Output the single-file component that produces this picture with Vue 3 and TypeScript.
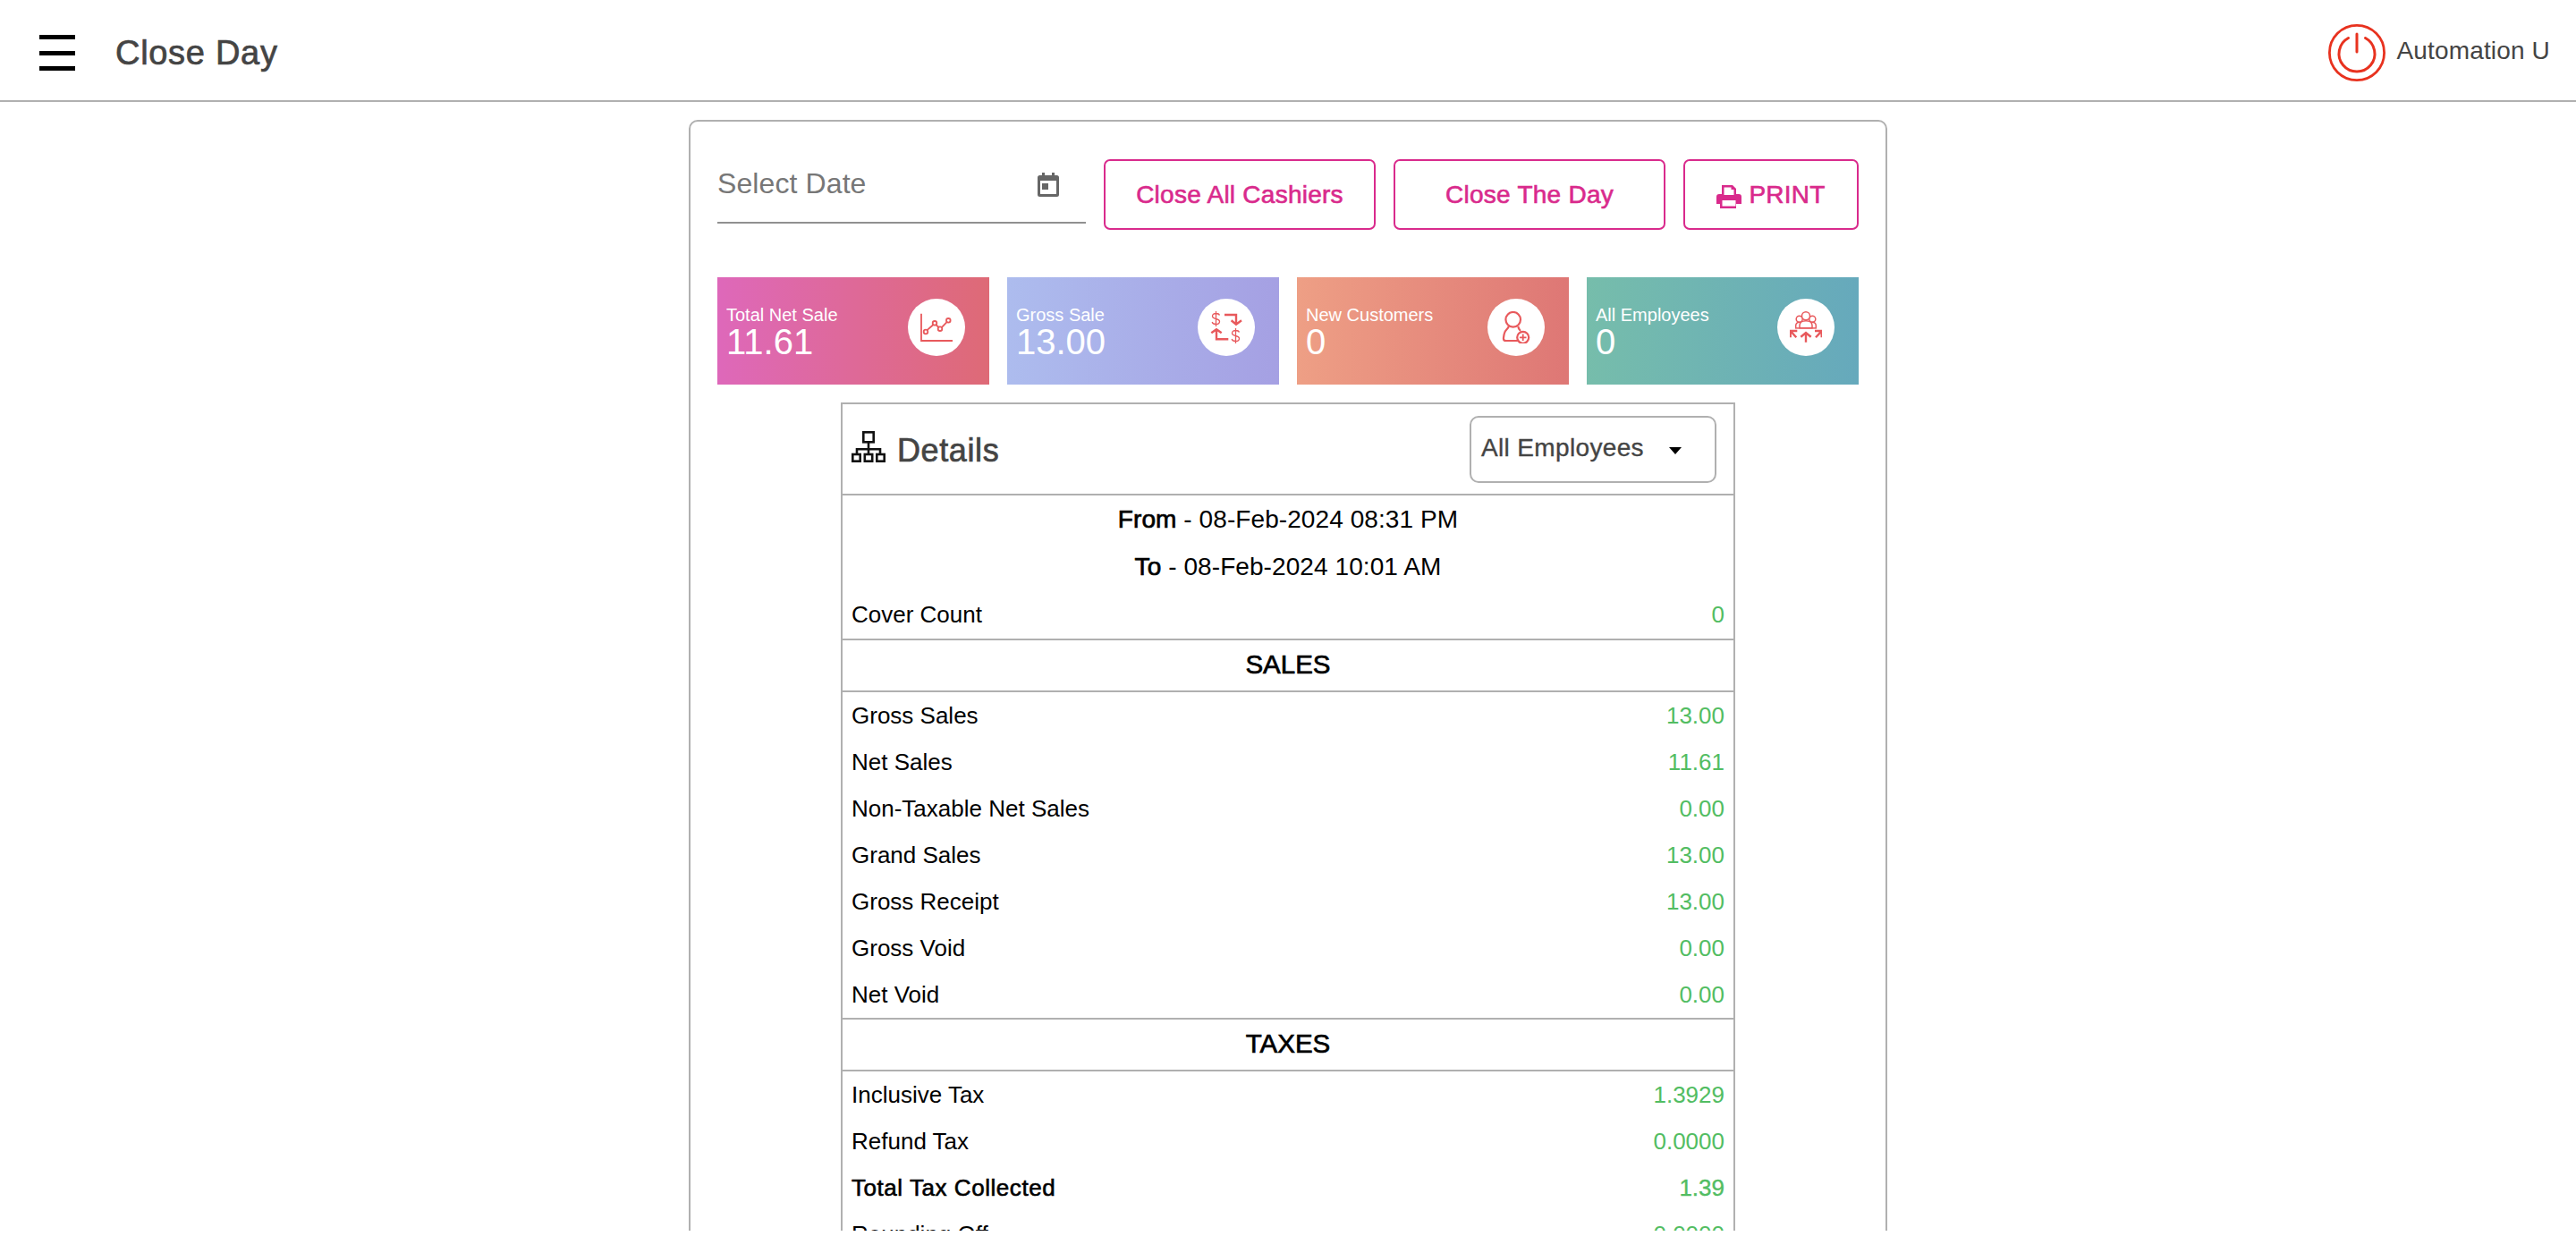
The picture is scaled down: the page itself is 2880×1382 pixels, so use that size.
<script setup lang="ts">
interface Row {
  label: string;
  value: string;
  strong?: boolean;
}

const salesRows: Row[] = [
  { label: 'Gross Sales', value: '13.00' },
  { label: 'Net Sales', value: '11.61' },
  { label: 'Non-Taxable Net Sales', value: '0.00' },
  { label: 'Grand Sales', value: '13.00' },
  { label: 'Gross Receipt', value: '13.00' },
  { label: 'Gross Void', value: '0.00' },
  { label: 'Net Void', value: '0.00' },
];

const taxRows: Row[] = [
  { label: 'Inclusive Tax', value: '1.3929' },
  { label: 'Refund Tax', value: '0.0000' },
  { label: 'Total Tax Collected', value: '1.39', strong: true },
  { label: 'Rounding Off', value: '0.0000' },
];
</script>

<template>
  <div class="page">
    <header class="topbar">
      <div class="topbar-left">
        <div class="burger"><span></span><span></span><span></span></div>
        <h1 class="title">Close Day</h1>
      </div>
      <div class="user">
        <svg class="power" viewBox="0 0 64 64" fill="none" stroke="#e8321f">
          <circle cx="32" cy="32" r="30.600" stroke-width="2.800" />
          <path d="M22.500 15.500a20 20 0 1 0 19 0" stroke-width="3" stroke-linecap="round" />
          <path d="M32 11v20" stroke-width="3" stroke-linecap="round" />
        </svg>
        <span class="user-name">Automation U</span>
      </div>
    </header>

    <main class="panel">
      <div class="actions">
        <div class="date-field">
          <span class="date-label">Select Date</span>
          <svg class="calendar" viewBox="0 0 24 27" fill="#666">
            <path d="M5 0h3v3h8V0h3v3h2.500A2.500 2.500 0 0 1 24 5.500v19a2.500 2.500 0 0 1-2.500 2.500h-19A2.500 2.500 0 0 1 0 24.500v-19A2.500 2.500 0 0 1 2.500 3H5zM3 9v14.500c0 .3.200.5.500.5h17c.3 0 .5-.2.500-.5V9z" />
            <rect x="5" y="12" width="7" height="7" />
          </svg>
        </div>
        <button class="btn btn-cashiers">Close All Cashiers</button>
        <button class="btn btn-day">Close The Day</button>
        <button class="btn btn-print">
          <svg class="printer" viewBox="0 0 28 26" fill="#d92a8c">
            <path d="M6 0h12l4 4v6h3a3 3 0 0 1 3 3v8h-6v5H4v-5h-4v-8a3 3 0 0 1 3-3h3zm2.500 2.500V11h11V5h-3V2.500zM6.500 17v6.500h15V17z" fill-rule="evenodd" />
          </svg>
          PRINT
        </button>
      </div>

      <div class="cards">
        <div class="card card-net">
          <div class="card-text">
            <span class="card-label">Total Net Sale</span>
            <span class="card-value">11.61</span>
          </div>
          <div class="card-icon">
            <svg viewBox="0 0 36 36" fill="none" stroke="#e8595c" stroke-width="1.800">
              <path d="M1 2.700V33h35" />
              <path d="M7.500 21.200l7-6.200M17.200 15l3.400 3M23.800 18.200l6-6.400" />
              <circle cx="6" cy="23" r="2.300" />
              <circle cx="16" cy="13.300" r="2.300" />
              <circle cx="22" cy="19.700" r="2.300" />
              <circle cx="31.300" cy="10.300" r="2.300" />
            </svg>
          </div>
        </div>
        <div class="card card-gross">
          <div class="card-text">
            <span class="card-label">Gross Sale</span>
            <span class="card-value">13.00</span>
          </div>
          <div class="card-icon">
            <svg viewBox="0 0 36 36" fill="none" stroke="#e8595c">
              <path d="M10.500 4.500C10 3 8.500 2.500 6.500 2.500 4 2.500 2.500 3.700 2.500 5.500 2.500 9.500 10.500 7.500 10.500 11.500 10.500 13.500 9 14.500 6.500 14.500 4 14.500 2.500 13.500 2.200 12M6.500 0v17" stroke-width="1.300" />
              <path d="M10.500 4.500C10 3 8.500 2.500 6.500 2.500 4 2.500 2.500 3.700 2.500 5.500 2.500 9.500 10.500 7.500 10.500 11.500 10.500 13.500 9 14.500 6.500 14.500 4 14.500 2.500 13.500 2.200 12M6.500 0v17" stroke-width="1.300" transform="translate(22 19)" />
              <path d="M16 4h13v10M23.600 10.300l5.400 4.400 6-4.400" stroke-width="2.400" />
              <path d="M20.300 31.300H7V21M1.300 24.300l5.700-4 5.700 4" stroke-width="2.400" />
            </svg>
          </div>
        </div>
        <div class="card card-customers">
          <div class="card-text">
            <span class="card-label">New Customers</span>
            <span class="card-value">0</span>
          </div>
          <div class="card-icon">
            <svg viewBox="0 0 36 36" fill="none" stroke="#e8595c" stroke-width="2.200">
              <circle cx="14.700" cy="9.300" r="8.300" />
              <path d="M9.700 17c-.5 3-4.500 4-5 8.300-.3 2-1 4.500-.7 6 .3 1.500 1.300 1.700 2.300 1.700H20" />
              <path d="M20.300 17c.3 2.500 1.500 4 2.700 5" />
              <circle cx="25.700" cy="29.300" r="6.500" fill="#fff" />
              <path d="M25.700 25.500v7.600M21.900 29.300h7.600" stroke-width="1.800" />
            </svg>
          </div>
        </div>
        <div class="card card-employees">
          <div class="card-text">
            <span class="card-label">All Employees</span>
            <span class="card-value">0</span>
          </div>
          <div class="card-icon">
            <svg viewBox="0 0 36 36" fill="none" stroke="#e8595c" stroke-width="1.500">
              <circle cx="10.700" cy="8.700" r="3.500" />
              <circle cx="25.300" cy="8.700" r="3.500" />
              <path d="M6.700 18.700v-2.500c0-2.500 2-4 4.500-4M29.300 18.700v-2.500c0-2.500-2-4-4.500-4" />
              <circle cx="18" cy="5.300" r="4.500" fill="#fff" />
              <path d="M11 18.700v-3c0-3 3-5 7-5s7 2 7 5v3z" fill="#fff" />
              <path d="M6 18.900h24" />
              <path d="M18 34.700V24M12.300 28.700L18 24l5.700 4.700" stroke-width="2.400" />
              <path d="M7.300 29.300L1.200 22.500M8.300 22H.7v7.300" stroke-width="2.400" />
              <path d="M29 29.300l6.200-6.800M28 22h7.700v7.300" stroke-width="2.400" />
            </svg>
          </div>
        </div>
      </div>

      <section class="details">
        <div class="details-head">
          <div class="details-title">
            <svg class="sitemap" viewBox="0 0 38 35" fill="none" stroke="#111" stroke-width="2.600">
              <rect x="13.300" y="1.300" width="11.400" height="11" />
              <path d="M19 12.300v8M6 26v-5.700h26V26M19 20.300V26" />
              <rect x="1.300" y="26" width="8.400" height="7.700" />
              <rect x="14.800" y="26" width="8.400" height="7.700" />
              <rect x="28.300" y="26" width="8.400" height="7.700" />
            </svg>
            <span class="details-label">Details</span>
          </div>
          <div class="employee-select">
            <span>All Employees</span>
            <i class="select-arrow"></i>
          </div>
        </div>

        <div class="summary">
          <p class="range"><b>From</b> - 08-Feb-2024 08:31 PM</p>
          <p class="range"><b>To</b> - 08-Feb-2024 10:01 AM</p>
          <div class="row row-cover">
            <span>Cover Count</span>
            <span class="amount">0</span>
          </div>
        </div>

        <h2 class="section-title">SALES</h2>
        <div class="rows">
          <div v-for="row in salesRows" :key="row.label" class="row">
            <span>{{ row.label }}</span>
            <span class="amount">{{ row.value }}</span>
          </div>
        </div>

        <h2 class="section-title">TAXES</h2>
        <div class="rows">
          <div v-for="row in taxRows" :key="row.label" class="row" :class="{ strong: row.strong }">
            <span>{{ row.label }}</span>
            <span class="amount">{{ row.value }}</span>
          </div>
        </div>
      </section>
    </main>
  </div>
</template>

<style>
html,
body {
  margin: 0;
  background: #fff;
  overflow: hidden;
}
</style>

<style scoped>
.page {
  height: 1376px;
  overflow: hidden;
  background: #fff;
  font-family: 'Liberation Sans', Arial, sans-serif;
  color: #000;
}

.topbar {
  box-sizing: border-box;
  height: 114px;
  border-bottom: 2px solid #b0b0b0;
  display: flex;
  align-items: center;
  justify-content: space-between;
  padding: 6px 29px 0 44px;
}

.topbar-left {
  display: flex;
  align-items: center;
  gap: 45px;
}

.burger {
  width: 40px;
  height: 40px;
  display: flex;
  flex-direction: column;
  justify-content: space-between;
}

.burger span {
  display: block;
  height: 5px;
  background: #000;
}

.title {
  margin: 0;
  font-size: 38px;
  font-weight: 400;
  color: #444;
  letter-spacing: 0.7px;
  -webkit-text-stroke: 0.7px #444;
}

.user {
  display: flex;
  align-items: center;
  gap: 13px;
}

.power {
  width: 64px;
  height: 64px;
  flex: none;
}

.user-name {
  font-size: 28px;
  color: #444;
  letter-spacing: 0.15px;
  padding-bottom: 5px;
}

.panel {
  box-sizing: border-box;
  width: 1340px;
  height: 1400px;
  margin: 20px auto 0;
  padding: 42px 30px 0;
  border: 2px solid #b0b0b0;
  border-radius: 10px;
}

.actions {
  display: flex;
  align-items: stretch;
  height: 79px;
}

.date-field {
  box-sizing: border-box;
  width: 412px;
  margin: 0 20px 0 0;
  height: 72px;
  border-bottom: 2px solid #909090;
  display: flex;
  justify-content: space-between;
  padding-top: 9px;
}

.date-label {
  font-size: 32px;
  line-height: 36px;
  color: #777;
  letter-spacing: 0.1px;
}

.calendar {
  width: 24px;
  height: 27px;
  margin: 6px 30px 0 0;
}

.btn {
  box-sizing: border-box;
  height: 79px;
  background: #fff;
  border: 2px solid #d92a8c;
  border-radius: 7px;
  color: #d92a8c;
  font-family: inherit;
  font-size: 28px;
  letter-spacing: 0.25px;
  -webkit-text-stroke: 0.6px #d92a8c;
  display: flex;
  align-items: center;
  justify-content: center;
  padding: 1px 0 0;
}

.btn-cashiers {
  width: 304px;
  margin-right: 20px;
}

.btn-day {
  width: 304px;
  margin-right: 20px;
}

.btn-print {
  width: 196px;
  gap: 8px;
}

.printer {
  width: 28px;
  height: 26px;
  margin-top: 4px;
}

.cards {
  display: grid;
  grid-template-columns: repeat(4, 304px);
  gap: 20px;
  margin-top: 53px;
}

.card {
  height: 120px;
  box-sizing: border-box;
  padding: 24px 27px 0 10px;
  display: flex;
  justify-content: space-between;
  color: #fff;
}

.card-net {
  background: linear-gradient(90deg, #de68ba, #de6a76);
}

.card-gross {
  background: linear-gradient(90deg, #adbcee, #a5a0e3);
}

.card-customers {
  background: linear-gradient(90deg, #ee9f85, #de7775);
}

.card-employees {
  background: linear-gradient(90deg, #76bdab, #66a9bc);
}

.card-text {
  display: flex;
  flex-direction: column;
}

.card-label {
  font-size: 20px;
  line-height: 24px;
  margin-top: 6px;
}

.card-value {
  font-size: 40px;
  line-height: 36px;
}

.card-icon {
  width: 64px;
  height: 64px;
  border-radius: 50%;
  background: #fff;
  display: flex;
  align-items: center;
  justify-content: center;
}

.card-icon svg {
  width: 36px;
  height: 36px;
}

.details {
  box-sizing: border-box;
  width: 1000px;
  margin: 20px auto 0;
  border: 2px solid #b0b0b0;
  border-bottom: 0;
}

.details-head {
  box-sizing: border-box;
  height: 102px;
  border-bottom: 2px solid #b0b0b0;
  display: flex;
  align-items: center;
  justify-content: space-between;
  padding: 0 19px 0 10px;
}

.details-title {
  display: flex;
  align-items: center;
  gap: 13px;
  font-size: 36px;
  color: #444;
}

.details-label {
  padding-top: 4px;
  letter-spacing: 0.6px;
  -webkit-text-stroke: 0.7px #444;
}

.sitemap {
  width: 38px;
  height: 35px;
  margin-top: -6px;
}

.employee-select {
  box-sizing: border-box;
  width: 276px;
  height: 75px;
  border: 2px solid #b0b0b0;
  border-radius: 10px;
  display: flex;
  align-items: center;
  justify-content: space-between;
  padding: 0 37px 2px 11px;
  font-size: 28px;
  letter-spacing: 0.35px;
  color: #444;
  -webkit-text-stroke: 0.35px #444;
}

.select-arrow {
  width: 0;
  height: 0;
  margin-top: 6px;
  border-left: 7.500px solid transparent;
  border-right: 7.500px solid transparent;
  border-top: 8px solid #000;
}

.summary {
  border-bottom: 2px solid #b0b0b0;
}

.range {
  margin: 0;
  height: 53px;
  line-height: 54px;
  text-align: center;
  font-size: 28px;
  letter-spacing: 0.08px;
}

.range b {
  font-weight: 400;
  -webkit-text-stroke: 0.7px #000;
}

.section-title {
  box-sizing: border-box;
  height: 58px;
  margin: 0;
  border-bottom: 2px solid #b0b0b0;
  text-align: center;
  font-size: 29.500px;
  line-height: 54px;
  font-weight: 400;
  -webkit-text-stroke: 0.7px #000;
}

.rows {
  border-bottom: 2px solid #b0b0b0;
}

.row {
  height: 52px;
  display: flex;
  justify-content: space-between;
  align-items: center;
  padding: 0 10px;
  font-size: 26px;
}

.row-cover {
  height: 54px;
}

.amount {
  color: #52bd62;
}

.strong span:first-child {
  letter-spacing: 0.55px;
  -webkit-text-stroke: 0.6px #000;
}

.strong .amount {
  -webkit-text-stroke: 0.35px #52bd62;
}
</style>
